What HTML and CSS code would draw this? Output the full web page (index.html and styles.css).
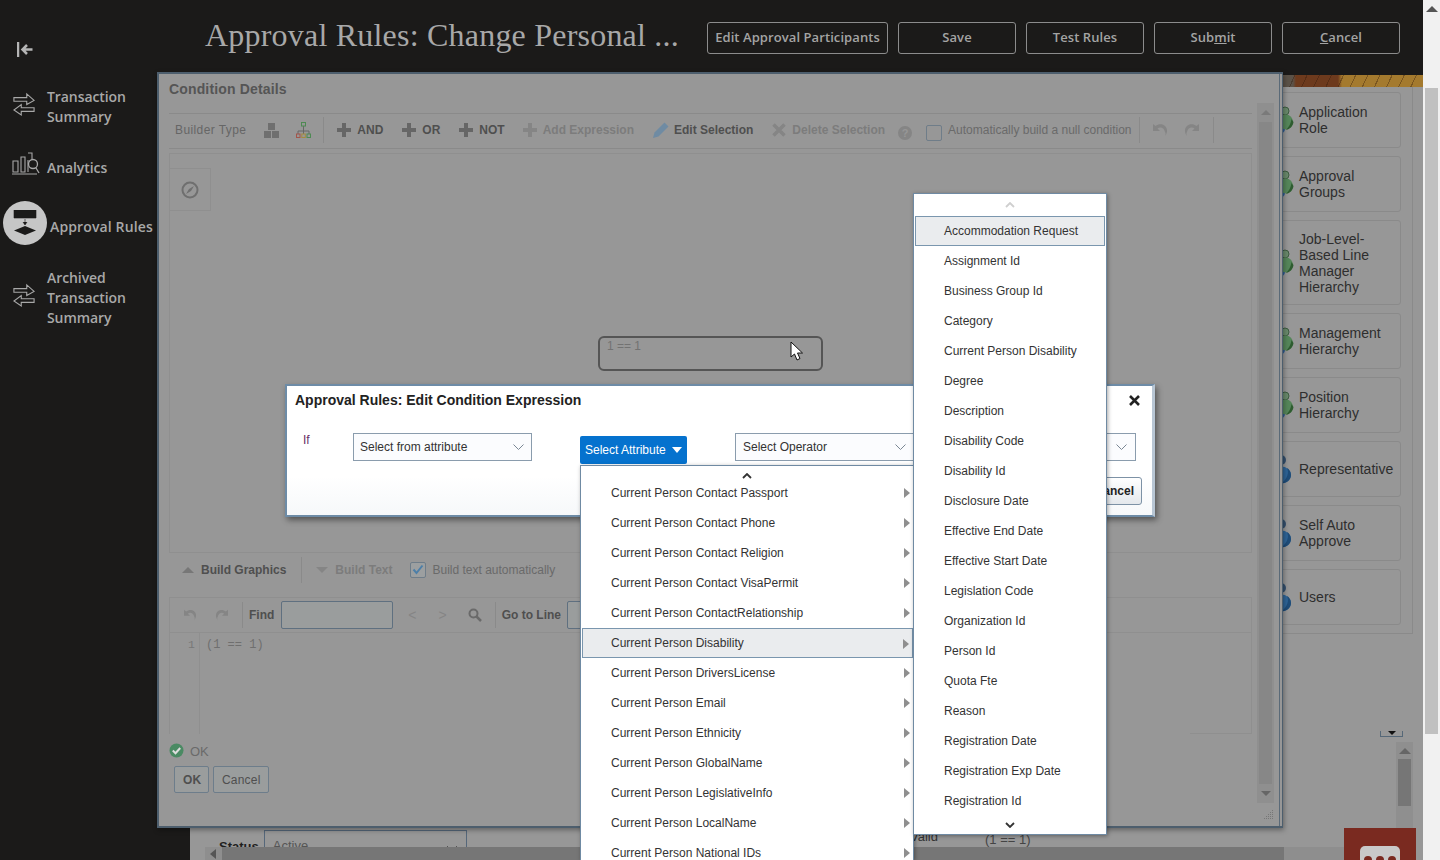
FILE: index.html
```html
<!DOCTYPE html>
<html lang="en">
<head>
<meta charset="utf-8">
<title>Approval Rules</title>
<link rel="stylesheet" href="styles.css">
</head>
<body>
<svg class="defs" width="0" height="0" aria-hidden="true">
  <defs>
    <symbol id="swap" viewBox="0 0 24 26"><path d="M1 5.500H15V1.500L23 8.500 15 13V9.500H1ZM23 16.500H9V13L1 19 9 24.500V20.500H23Z" fill="none" stroke="#a8a8a8" stroke-width="1.200"/></symbol>
    <symbol id="plus" viewBox="0 0 14 14"><path d="M5 0H9V5H14V9H9V14H5V9H0V5H5Z"/></symbol>
    <symbol id="undo" viewBox="0 0 16 14"><path d="M1 1V8H8L5.500 5.500C8 3.500 12 4.500 13 9 14 10.500 13.500 12 13 13 16.500 9 15.500 3 10.500 1.500 8 .8 5.500 1.500 3.500 3Z"/></symbol>
    <symbol id="redo" viewBox="0 0 16 14"><path d="M15 1V8H8L10.500 5.500C8 3.500 4 4.500 3 9 2 10.500 2.500 12 3 13-.5 9 .5 3 5.500 1.500 8 .8 10.500 1.500 12.500 3Z"/></symbol>
    <symbol id="green" viewBox="0 0 24 28"><ellipse cx="9" cy="23" rx="6" ry="5" fill="#2f5c93"/><circle cx="15" cy="5" r="4" fill="#6a8a6c" stroke="#3d5c40"/><ellipse cx="16" cy="16" rx="7" ry="7.500" fill="#55865a"/><path d="M16 24C20 23 23 20 23.500 16L21.500 13C21 17 19 21 16 24Z" fill="#2e5c30"/></symbol>
    <symbol id="blue" viewBox="0 0 24 30"><circle cx="11" cy="6" r="5" fill="#34506f"/><ellipse cx="11" cy="21" rx="10" ry="8.500" fill="#2f6598"/><path d="M11 29.500C17 29 21 26 21 21 21 18 19 15 17 14 19 18 18 25 11 29.500Z" fill="#1f4c78"/></symbol>
  </defs>
</svg>
<div class="page">
  <div class="app">
    <header class="topbar">
      <h1 class="title">Approval Rules: Change Personal ...</h1>
      <nav class="actions">
        <button class="act act-wide">Edit Approval Participants</button>
        <button class="act">Save</button>
        <button class="act">Test Rules</button>
        <button class="act">Sub<u>m</u>it</button>
        <button class="act"><u>C</u>ancel</button>
      </nav>
    </header>
    <div class="below">
      <aside class="side">
        <svg class="collapse" width="16" height="16" viewBox="0 0 16 16"><path d="M1 0V15" stroke="#b5b5b5" stroke-width="2.500"/><path d="M15.500 7.500H6M10 3 5.500 7.500 10 12" fill="none" stroke="#b5b5b5" stroke-width="2.500"/></svg>
        <a class="nav nav-a"><svg class="nav-ico" width="22" height="25"><use href="#swap"/></svg><span>Transaction<br>Summary</span></a>
        <a class="nav nav-b"><svg class="nav-ico an" width="28" height="24" viewBox="0 0 28 24"><path d="M1 9H6V20H1ZM9 5H13V20H9ZM16 1H20V8M16 8V20M0 22H25" fill="none" stroke="#a8a8a8" stroke-width="1.100"/><circle cx="21" cy="12" r="4.500" fill="#1b1a19" stroke="#a8a8a8" stroke-width="1.300"/><path d="M24 16 27 21" stroke="#a8a8a8" stroke-width="1.300"/></svg><span>Analytics</span></a>
        <a class="nav nav-c"><span class="disc"><svg width="24" height="26" viewBox="0 0 24 26"><path d="M1 0H23V8H1ZM12 9V14M10 12 12 15 14 12" fill="#1b1a19" stroke="#1b1a19" stroke-width=".6"/><path d="M12 16 23 20.500 12 25 1 20.500Z" fill="#1b1a19"/></svg></span><span class="nav-low">Approval Rules</span></a>
        <a class="nav nav-d"><svg class="nav-ico" width="22" height="25"><use href="#swap"/></svg><span>Archived<br>Transaction<br>Summary</span></a>
      </aside>
      <main class="main">
        <div class="banner"></div>
        <div class="dir-panel">
          <div class="card"><svg class="pic" width="24" height="28"><use href="#green"/></svg><span>Application Role</span></div>
          <div class="card"><svg class="pic" width="24" height="28"><use href="#green"/></svg><span>Approval<br>Groups</span></div>
          <div class="card card-tall"><svg class="pic" width="24" height="28"><use href="#green"/></svg><span>Job-Level-<br>Based Line<br>Manager<br>Hierarchy</span></div>
          <div class="card"><svg class="pic" width="24" height="28"><use href="#green"/></svg><span>Management<br>Hierarchy</span></div>
          <div class="card"><svg class="pic" width="24" height="28"><use href="#green"/></svg><span>Position<br>Hierarchy</span></div>
          <div class="card"><svg class="pic" width="24" height="30"><use href="#blue"/></svg><span>Representative</span></div>
          <div class="card"><svg class="pic" width="24" height="30"><use href="#blue"/></svg><span>Self Auto<br>Approve</span></div>
          <div class="card"><svg class="pic" width="24" height="30"><use href="#blue"/></svg><span>Users</span></div>
        </div>
        <div class="lower">
          <div class="splitter"><svg width="8" height="4" viewBox="0 0 8 4"><path d="M0 0H8L4 4Z" fill="#111"/></svg></div>
          <div class="vbar">
            <svg width="12" height="6" viewBox="0 0 12 6"><path d="M6 0 12 6H0Z" fill="#666"/></svg>
            <div class="vthumb"></div>
          </div>
        </div>
        <div class="status-row">
          <b class="st-label">Status</b>
          <div class="st-select">Active<svg width="12" height="7" viewBox="0 0 12 7"><path d="M1 1 6 6 11 1" fill="none" stroke="#555"/></svg></div>
          <span class="st-valid">Valid</span>
          <span class="st-expr">(1 == 1)</span>
        </div>
        <div class="hbar">
          <svg width="6" height="10" viewBox="0 0 6 10"><path d="M6 0V10L0 5Z" fill="#555"/></svg>
          <div class="hthumb"></div>
        </div>
      </main>
    </div>

    <div class="chat"><div class="bubble"><i></i><i></i><i></i></div></div>

    <section class="cond">
      <div class="cond-body">
        <h2 class="cond-title">Condition Details</h2>
        <div class="toolbar">
          <span class="t-lbl">Builder Type</span>
          <svg class="i-blocks" width="15" height="15" viewBox="0 0 15 15" fill="#6f6f6f"><path d="M4 0H11V7H4ZM0 8H7V15H0ZM8 8H15V15H8Z"/></svg>
          <svg class="i-org" width="15" height="16" viewBox="0 0 15 16"><path d="M7.500 4V9M2 12V9H13V12M7.500 9V12" fill="none" stroke="#666"/><rect x="5.500" y=".5" width="4" height="3.500" fill="none" stroke="#4d8a52"/><rect x=".5" y="12" width="3.500" height="3.500" fill="none" stroke="#a3554a"/><rect x="5.800" y="12" width="3.500" height="3.500" fill="none" stroke="#a58a3d"/><rect x="11" y="12" width="3.500" height="3.500" fill="none" stroke="#4d8a52"/></svg>
          <i class="t-sep s1"></i>
          <svg class="pl p1" width="14" height="14"><use href="#plus"/></svg><b class="t-on">AND</b>
          <svg class="pl p2" width="14" height="14"><use href="#plus"/></svg><b class="t-on">OR</b>
          <svg class="pl p3" width="14" height="14"><use href="#plus"/></svg><b class="t-on">NOT</b>
          <svg class="pl pl-off p4" width="14" height="14"><use href="#plus"/></svg><b class="t-off">Add Expression</b>
          <svg class="i-pen" width="16" height="16" viewBox="0 0 16 16"><path d="M0 16 1.500 10.500 11.500 .5 15.500 4.500 5.500 14.500Z" fill="#6f8ba3"/></svg><b class="t-on">Edit Selection</b>
          <svg class="i-x" width="14" height="14" viewBox="0 0 14 14"><path d="M1.500 1.500 12.500 12.500M12.500 1.500 1.500 12.500" stroke="#858585" stroke-width="3.500"/></svg><b class="t-off">Delete Selection</b>
          <span class="i-q">?</span>
          <span class="chk"></span>
          <span class="t-auto">Automatically build a null condition</span>
          <i class="t-sep s2"></i>
          <svg class="hist h1" width="16" height="14"><use href="#undo"/></svg>
          <svg class="hist h2" width="16" height="14"><use href="#redo"/></svg>
          <i class="t-sep s3"></i>
        </div>
        <div class="canvas">
          <div class="navbox"><svg width="18" height="18" viewBox="0 0 18 18"><circle cx="9" cy="9" r="7.500" fill="none" stroke="#6f6f6f" stroke-width="2"/><path d="M13 5 10 10 5 13 8 8Z" fill="#6f6f6f"/></svg></div>
          <div class="node">1 == 1</div>
          <svg class="cursor" width="14" height="20" viewBox="0 0 14 20"><path d="M1 1V16L4.500 13 7 19 10 17.500 7.500 12H12.500Z" fill="#fff" stroke="#111"/></svg>
        </div>
        <div class="buildbar">
          <svg class="tri" width="12" height="6" viewBox="0 0 12 6"><path d="M6 0 12 6H0Z" fill="#777"/></svg><b class="t-on bb1">Build Graphics</b>
          <i class="t-sep s4"></i>
          <svg class="tri tri2" width="12" height="6" viewBox="0 0 12 6"><path d="M0 0H12L6 6Z" fill="#858585"/></svg><b class="t-off bb2">Build Text</b>
          <span class="chk chk-on"><svg width="12" height="11" viewBox="0 0 12 11"><path d="M1.500 5.500 4.500 9 10.500 1.500" fill="none" stroke="#4d7fa8" stroke-width="2"/></svg></span>
          <span class="t-auto">Build text automatically</span>
        </div>
        <div class="editor">
          <div class="ed-tools">
            <svg class="hist h3" width="14" height="12"><use href="#undo"/></svg>
            <svg class="hist h4" width="14" height="12"><use href="#redo"/></svg>
            <i class="t-sep s5"></i>
            <b class="t-on ed-find">Find</b>
            <span class="ed-input"></span>
            <span class="chev c1">&lt;</span>
            <span class="chev c2">&gt;</span>
            <svg class="i-search" width="14" height="14" viewBox="0 0 14 14"><circle cx="5.500" cy="5.500" r="4" fill="none" stroke="#6a6a6a" stroke-width="2"/><path d="M8.500 8.500 13 13" stroke="#6a6a6a" stroke-width="2.500"/></svg>
            <i class="t-sep s6"></i>
            <b class="t-on">Go to Line</b>
            <span class="ed-input ed-input2"></span>
          </div>
          <div class="ed-code"><span class="gutter">1</span><code class="code">(1 == 1)</code></div>
        </div>
        <div class="ok-row"><svg width="15" height="15" viewBox="0 0 15 15"><circle cx="7.500" cy="7.500" r="7" fill="#4a8a63"/><path d="M3.800 7.500 6.500 10.200 11.200 5" fill="none" stroke="#ddd" stroke-width="2"/></svg><span>OK</span></div>
        <div class="ok-btns"><button class="btn-g btn-ok">OK</button><button class="btn-g">Cancel</button></div>
      </div>
      <div class="cond-scroll">
        <svg width="10" height="5" viewBox="0 0 10 5"><path d="M5 0 10 5H0Z" fill="#7a7a7a"/></svg>
        <div class="cs-thumb"></div>
        <svg width="10" height="5" viewBox="0 0 10 5"><path d="M0 0H10L5 5Z" fill="#666"/></svg>
      </div>
      <svg class="grip" width="10" height="10" viewBox="0 0 10 10" fill="#777"><path d="M8 0h1v1H8zM6 2h1v1H6zM8 2h1v1H8zM4 4h1v1H4zM6 4h1v1H6zM8 4h1v1H8zM2 6h1v1H2zM4 6h1v1H4zM6 6h1v1H6zM8 6h1v1H8zM0 8h1v1H0zM2 8h1v1H2zM4 8h1v1H4zM6 8h1v1H6zM8 8h1v1H8z"/></svg>
    </section>

    <section class="edit">
      <header class="edit-head"><h3>Approval Rules: Edit Condition Expression</h3><svg class="close" width="11" height="11" viewBox="0 0 11 11"><path d="M1 1 10 10M10 1 1 10" stroke="#222" stroke-width="2.600"/></svg></header>
      <div class="edit-row">
        <span class="if">If</span>
        <div class="sel sel1">Select from attribute<svg width="11" height="6" viewBox="0 0 11 6"><path d="M.5 .5 5.500 5.500 10.500 .5" fill="none" stroke="#7a8794"/></svg></div>
        <button class="attr">Select Attribute<svg width="10" height="6" viewBox="0 0 10 6"><path d="M0 0H10L5 6Z" fill="#fff"/></svg></button>
        <div class="sel sel2">Select Operator<svg width="11" height="6" viewBox="0 0 11 6"><path d="M.5 .5 5.500 5.500 10.500 .5" fill="none" stroke="#7a8794"/></svg></div>
        <div class="sel sel3"><svg width="11" height="6" viewBox="0 0 11 6"><path d="M.5 .5 5.500 5.500 10.500 .5" fill="none" stroke="#7a8794"/></svg></div>
      </div>
      <div class="edit-foot"><button class="btn-w">Cancel</button></div>
    </section>

    <div class="menu menu-a">
      <div class="m-up"><svg width="10" height="6" viewBox="0 0 10 6"><path d="M1 5 5 1 9 5" fill="none" stroke="#333" stroke-width="1.800"/></svg></div>
      <div class="m-row">Current Person Contact Passport<i class="m-arrow"></i></div>
      <div class="m-row">Current Person Contact Phone<i class="m-arrow"></i></div>
      <div class="m-row">Current Person Contact Religion<i class="m-arrow"></i></div>
      <div class="m-row">Current Person Contact VisaPermit<i class="m-arrow"></i></div>
      <div class="m-row">Current Person ContactRelationship<i class="m-arrow"></i></div>
      <div class="m-row m-hi">Current Person Disability<i class="m-arrow"></i></div>
      <div class="m-row">Current Person DriversLicense<i class="m-arrow"></i></div>
      <div class="m-row">Current Person Email<i class="m-arrow"></i></div>
      <div class="m-row">Current Person Ethnicity<i class="m-arrow"></i></div>
      <div class="m-row">Current Person GlobalName<i class="m-arrow"></i></div>
      <div class="m-row">Current Person LegislativeInfo<i class="m-arrow"></i></div>
      <div class="m-row">Current Person LocalName<i class="m-arrow"></i></div>
      <div class="m-row">Current Person National IDs<i class="m-arrow"></i></div>
    </div>

    <div class="menu menu-b">
      <div class="m-up m-up2"><svg width="10" height="6" viewBox="0 0 10 6"><path d="M1 5 5 1 9 5" fill="none" stroke="#cfcfcf" stroke-width="1.800"/></svg></div>
      <div class="m-row m-hi">Accommodation Request</div>
      <div class="m-row">Assignment Id</div>
      <div class="m-row">Business Group Id</div>
      <div class="m-row">Category</div>
      <div class="m-row">Current Person Disability</div>
      <div class="m-row">Degree</div>
      <div class="m-row">Description</div>
      <div class="m-row">Disability Code</div>
      <div class="m-row">Disability Id</div>
      <div class="m-row">Disclosure Date</div>
      <div class="m-row">Effective End Date</div>
      <div class="m-row">Effective Start Date</div>
      <div class="m-row">Legislation Code</div>
      <div class="m-row">Organization Id</div>
      <div class="m-row">Person Id</div>
      <div class="m-row">Quota Fte</div>
      <div class="m-row">Reason</div>
      <div class="m-row">Registration Date</div>
      <div class="m-row">Registration Exp Date</div>
      <div class="m-row">Registration Id</div>
      <div class="m-down"><svg width="10" height="6" viewBox="0 0 10 6"><path d="M1 1 5 5 9 1" fill="none" stroke="#333" stroke-width="1.800"/></svg></div>
    </div>
  </div>
  <div class="pagebar">
    <svg width="12" height="6" viewBox="0 0 12 6"><path d="M6 0 12 6H0Z" fill="#555"/></svg>
    <div class="pagethumb"></div>
  </div>
</div>
</body>
</html>
```
FILE: styles.css
```css
* { box-sizing: border-box; }
html, body { margin: 0; height: 100%; overflow: hidden; }
body { font-family: "Liberation Sans", Arial, sans-serif; font-size: 12px; color: #333; }
.defs { position: absolute; }
button { font-family: inherit; }
.page { display: flex; width: 1440px; height: 860px; }
.app { position: relative; width: 1423px; height: 860px; overflow: hidden; background: #979797; display: flex; flex-direction: column; }

.pagebar { width: 17px; background: #f1f1f1; padding: 6px 2px 0; display: flex; flex-direction: column; align-items: center; }
.pagethumb { width: 13px; height: 646px; margin-top: 76px; background: #c0c0c0; }

.topbar { height: 75px; background: #1b1a19; display: flex; align-items: flex-start; padding: 22px 23px 0 205px; flex: none; }
.title { margin: -5px 0 0; font: 400 32px/36px "Liberation Serif", Georgia, serif; color: #a8a8a8; white-space: nowrap; letter-spacing: .21px; }
.actions { margin-left: auto; display: flex; gap: 10px; }
.act { width: 118px; height: 32px; background: transparent; border: 1px solid #8c8c8c; border-radius: 3px; color: #a4a4a4; font: 600 13px "Open Sans", sans-serif; letter-spacing: .08px; padding: 0 0 2px; }
.act-wide { width: 181px; }

.below { flex: 1; display: flex; min-height: 0; background: #979797; }
.side { width: 190px; flex: none; background: #1b1a19; position: relative; color: #a8a8a8; font: 600 14px/20px "Open Sans", sans-serif; letter-spacing: -.08px; margin-top: -1px; }
.collapse { display: block; margin: -32px 0 0 17px; position: relative; }
.nav { display: flex; align-items: center; }
.nav-ico { flex: none; margin: -6px 12px 0 13px; }
.nav-a { margin-top: 29px; }
.nav-b { margin-top: 28px; height: 26px; }
.nav-b .an { margin: -9px 7px 0 12px; }
.nav-c { margin-top: 20px; height: 44px; margin-left: 3px; }
.nav-low { margin-top: 8px; letter-spacing: .13px; }
.nav-d { margin-top: 23px; }
.disc { width: 44px; height: 44px; border-radius: 50%; background: #c6c6c6; display: flex; align-items: center; justify-content: center; margin-right: 3px; flex: none; }

.main { flex: 1; min-width: 0; display: flex; flex-direction: column; }
.banner { height: 12px; flex: none; background:
  repeating-linear-gradient(115deg, rgba(50,25,10,.38) 0 1px, transparent 1px 11px),
  linear-gradient(90deg, #5b5248 0 1103px, #6d3a1d 1106px 1148px, #a47a2e 1152px 100%); }

.dir-panel { width: 222px; margin-left: auto; margin-right: 10px; height: 547px; padding: 5px 11px 0 0; border-right: 1px solid #8a8a8a; border-bottom: 1px solid #8a8a8a; display: flex; flex-direction: column; gap: 8px; align-items: flex-end; color: #2e2e2e; font-size: 14px; line-height: 16px; flex: none; }
.card { width: 161px; height: 56px; flex: none; border: 1px solid #8a8a8a; border-radius: 3px; display: flex; align-items: center; padding-left: 29px; }
.card-tall { height: 85px; }
.pic { flex: none; margin-right: 5px; }

.lower { height: 194px; flex: none; position: relative; display: flex; flex-direction: column; align-items: flex-end; }
.splitter { width: 23px; height: 6px; margin: 97px 20px 0 0; border: 1px solid #566878; border-top: 0; display: flex; justify-content: center; align-items: flex-start; }
.vbar { width: 17px; height: 86px; margin: 5px 10px 0 0; background: #8f8f8f; display: flex; flex-direction: column; align-items: center; padding-top: 6px; }
.vthumb { width: 13px; height: 47px; margin-top: 5px; background: #767676; }

.status-row { height: 19px; flex: none; display: flex; overflow: hidden; align-items: flex-start; padding-left: 29px; }
.st-label { font-size: 13px; color: #1e1e1e; margin: 11px 5px 0 0; line-height: 15px; }
.st-select { width: 203px; height: 30px; margin-top: 2px; border: 1px solid #55677a; padding: 7px 0 0 8px; color: #555; font-size: 13px; position: relative; }
.st-select svg { position: absolute; right: 8px; top: 14px; }
.st-valid { position: absolute; left: 910px; top: 829px; font-size: 13px; color: #333; }
.st-expr { position: absolute; left: 985px; top: 832px; font-size: 13px; color: #444; }
.hbar { height: 13px; flex: none; margin-left: 15px; margin-right: 60px; background: #8e8e8e; border-top: 0; display: flex; align-items: center; padding-left: 5px; }
.hthumb { width: 1062px; height: 13px; margin-left: 6px; background: #767676; }

.chat { position: absolute; left: 1344px; top: 828px; width: 72px; height: 32px; background: #7a2a20; display: flex; justify-content: center; }
.bubble { width: 40px; height: 30px; margin-top: 18px; background: #c9c9c9; border-radius: 5px; display: flex; justify-content: center; gap: 4px; padding-top: 10px; }
.bubble i { width: 8px; height: 8px; border-radius: 50%; background: #7a2a20; }

.cond { position: absolute; left: 157px; top: 72px; width: 1126px; height: 756px; background: #979797; border: 2px solid #4d5e6d; border-right-width: 1px; box-shadow: 1px 2px 5px rgba(0,0,0,.35); display: flex; padding-left: 10px; }
.cond::after { content: ""; position: absolute; right: 2px; top: 0; bottom: 0; width: 1px; background: #5a6a78; }
.cond-body { width: 1083px; flex: none; color: #555; display: flex; flex-direction: column; }
.cond-title { margin: 0; height: 39px; flex: none; font: 700 14px/30px "Liberation Sans", sans-serif; color: #555; letter-spacing: .15px; }
.toolbar { height: 36px; flex: none; border-top: 1px solid #8a8a8a; border-bottom: 1px solid #8a8a8a; display: flex; align-items: center; padding: 0 0 2px 6px; white-space: nowrap; }
.toolbar > * { flex: none; }
.t-lbl { color: #666; margin-right: 18px; letter-spacing: .4px; }
.t-on { color: #4f4f4f; font-weight: 700; }
.t-off { color: #7c7c7c; font-weight: 700; }
.t-auto { color: #6a6a6a; }
.i-org { margin-left: 17px; }
.t-sep { display: block; width: 1px; height: 26px; background: #8a8a8a; }
.s1 { margin-left: 12px; }
.pl { fill: #666; margin-right: 6px; }
.pl-off { fill: #858585; }
.p1 { margin-left: 13px; }
.p2 { margin-left: 19px; }
.p3 { margin-left: 19px; }
.p4 { margin-left: 18px; }
.i-pen { margin: 0 5px 0 19px; }
.i-x { margin: 0 6px 0 19px; }
.i-q { width: 14px; height: 14px; border-radius: 50%; background: #858585; color: #979797; font: 700 11px/14px "Liberation Sans", sans-serif; text-align: center; margin: 5px 0 0 13px; }
.chk { width: 16px; height: 16px; border: 1px solid #6f7d89; border-radius: 2px; margin: 5px 6px 0 14px; display: flex; align-items: center; justify-content: center; }
.s2 { margin-left: 7px; }
.hist { fill: #858585; }
.h1 { margin-left: 12px; }
.h2 { margin-left: 16px; }
.s3 { margin-left: 13px; }

.canvas { height: 400px; flex: none; margin-top: 4px; border: 1px solid #8f8f8f; position: relative; }
.navbox { width: 42px; height: 43px; margin: 14px 0 0 -1px; border: 1px solid #8f8f8f; display: flex; align-items: center; justify-content: center; }
.node { position: absolute; left: 428px; top: 182px; width: 225px; height: 35px; border: 2px solid #555; border-radius: 6px; padding: 2px 0 0 7px; color: #727272; line-height: 13px; }
.cursor { position: absolute; left: 620px; top: 187px; }

.buildbar { height: 44px; flex: none; display: flex; align-items: center; padding: 0 0 11px 13px; }
.tri { margin-right: 7px; }
.bb1 { margin-right: 15px; }
.s4 { margin-right: 14px; height: 26px; }
.tri2 { margin-right: 7px; }
.chk-on { margin: 0 6px 0 18px; background: #9c9fa0; }

.editor { height: 137px; flex: none; border: 1px solid #8f8f8f; border-bottom: 0; position: relative; display: flex; flex-direction: column; }
.editor::after { content: ""; position: absolute; right: -1px; bottom: 0; width: 62px; height: 1px; background: #8f8f8f; }
.ed-tools { height: 35px; flex: none; border-bottom: 1px solid #8f8f8f; display: flex; align-items: center; white-space: nowrap; padding-left: 13px; }
.h4 { margin-left: 18px; }
.s5 { margin: 0 6px 0 13px; }
.ed-input { width: 112px; height: 28px; border: 1px solid #5f7080; border-radius: 2px; background: #9a9d9d; margin-left: 7px; flex: none; }
.ed-input2 { margin-left: 6px; width: 60px; }
.chev { color: #858585; font: 14px "Liberation Sans", sans-serif; }
.c1 { margin-left: 15px; }
.c2 { margin-left: 22px; }
.i-search { margin-left: 21px; }
.s6 { margin: 0 6px 0 13px; }
.ed-code { flex: 1; display: flex; }
.gutter { width: 30px; border-right: 1px solid #8f8f8f; text-align: right; padding: 6px 4px 0 0; font: 11.500px/12px "Liberation Mono", monospace; color: #777; }
.code { font: 12px/12px "Liberation Mono", monospace; color: #6f6f6f; padding: 6px 0 0 6px; }

.ok-row { height: 26px; flex: none; display: flex; align-items: center; color: #6a6a6a; font-size: 13px; margin-top: 3px; }
.ok-row span { margin-left: 6px; margin-top: 3px; }
.ok-btns { display: flex; gap: 4px; padding: 3px 0 0 5px; }
.btn-g { height: 27px; padding: 0 8px; border: 1px solid #6d7d8b; border-radius: 2px; background: #9a9d9d; color: #4f4f4f; font-size: 12px; font-weight: 700; letter-spacing: .1px; }
.btn-g + .btn-g { width: 56px; font-weight: 400; color: #4f4f4f; letter-spacing: .2px; }
.btn-ok { width: 35px; }

.cond-scroll { width: 17px; height: 700px; margin: 29px 0 0 5px; background: #8f8f8f; display: flex; flex-direction: column; align-items: center; justify-content: space-between; padding: 7px 0; flex: none; }
.cs-thumb { width: 13px; height: 662px; background: #878787; margin: 5px 0; }
.grip { position: absolute; right: 8px; bottom: 6px; }

.edit { position: absolute; left: 285px; top: 384px; width: 870px; height: 133px; background: linear-gradient(#fff 70%, #f6f8fa); border: 2px solid #6d8ba6; border-right-color: #b8c6d4; border-right-width: 3px; box-shadow: 2px 3px 6px rgba(0,0,0,.45); }
.edit-head { display: flex; justify-content: space-between; padding: 6px 12px 0 8px; height: 47px; }
.edit-head h3 { margin: 0; font: 700 14px/17px "Liberation Sans", sans-serif; color: #222; }
.close { margin-top: 3px; }
.edit-row { display: flex; align-items: flex-start; padding-left: 16px; }
.if { color: #6b2f66; width: 50px; }
.sel { height: 28px; border: 1px solid #8a9cad; background: #fbfcfe; display: flex; align-items: center; justify-content: space-between; padding: 0 7px 0 6px; flex: none; }
.sel1 { width: 179px; }
.attr { width: 107px; height: 28px; margin: 3px 0 0 48px; border: 0; border-radius: 2px; background: #0572ce; color: #fff; font-size: 12px; display: flex; align-items: center; gap: 6px; padding: 0 0 0 5px; }
.sel2 { width: 179px; margin-left: 48px; padding-left: 7px; }
.sel3 { width: 61px; margin-left: 161px; justify-content: flex-end; padding-right: 8px; }
.edit-foot { display: flex; justify-content: flex-end; padding: 13px 10px 0 0; }
.btn-w { width: 70px; height: 28px; border: 1px solid #7d92a6; border-radius: 3px; background: linear-gradient(#fff, #e4e8ec); color: #222; font-size: 12px; font-weight: 700; text-align: right; padding: 0 7px 0 0; }

.menu { position: absolute; background: #fff; border: 1px solid #6f8aa3; box-shadow: 1px 1px 4px rgba(0,0,0,.35); color: #333; }
.menu-a { left: 580px; top: 465px; width: 334px; height: 395px; padding: 0 0 0 1px; border-bottom: 0; }
.menu-b { left: 913px; top: 193px; width: 194px; height: 642px; padding: 0 1px; }
.m-up { height: 12px; display: flex; justify-content: center; padding: 7px 2px 0 0; }
.m-up2 { height: 22px; padding: 8px 0 0; }
.m-down { height: 18px; display: flex; justify-content: center; padding-top: 6px; }
.m-row { height: 30px; padding-left: 29px; display: flex; align-items: center; position: relative; white-space: nowrap; }
.m-hi { background: #eaecee; border: 1px solid #7a96ae; padding-left: 28px; }
.m-arrow { position: absolute; right: 3px; top: 10px; width: 0; height: 0; border-left: 6px solid #8f8f8f; border-top: 5px solid transparent; border-bottom: 5px solid transparent; }
```
